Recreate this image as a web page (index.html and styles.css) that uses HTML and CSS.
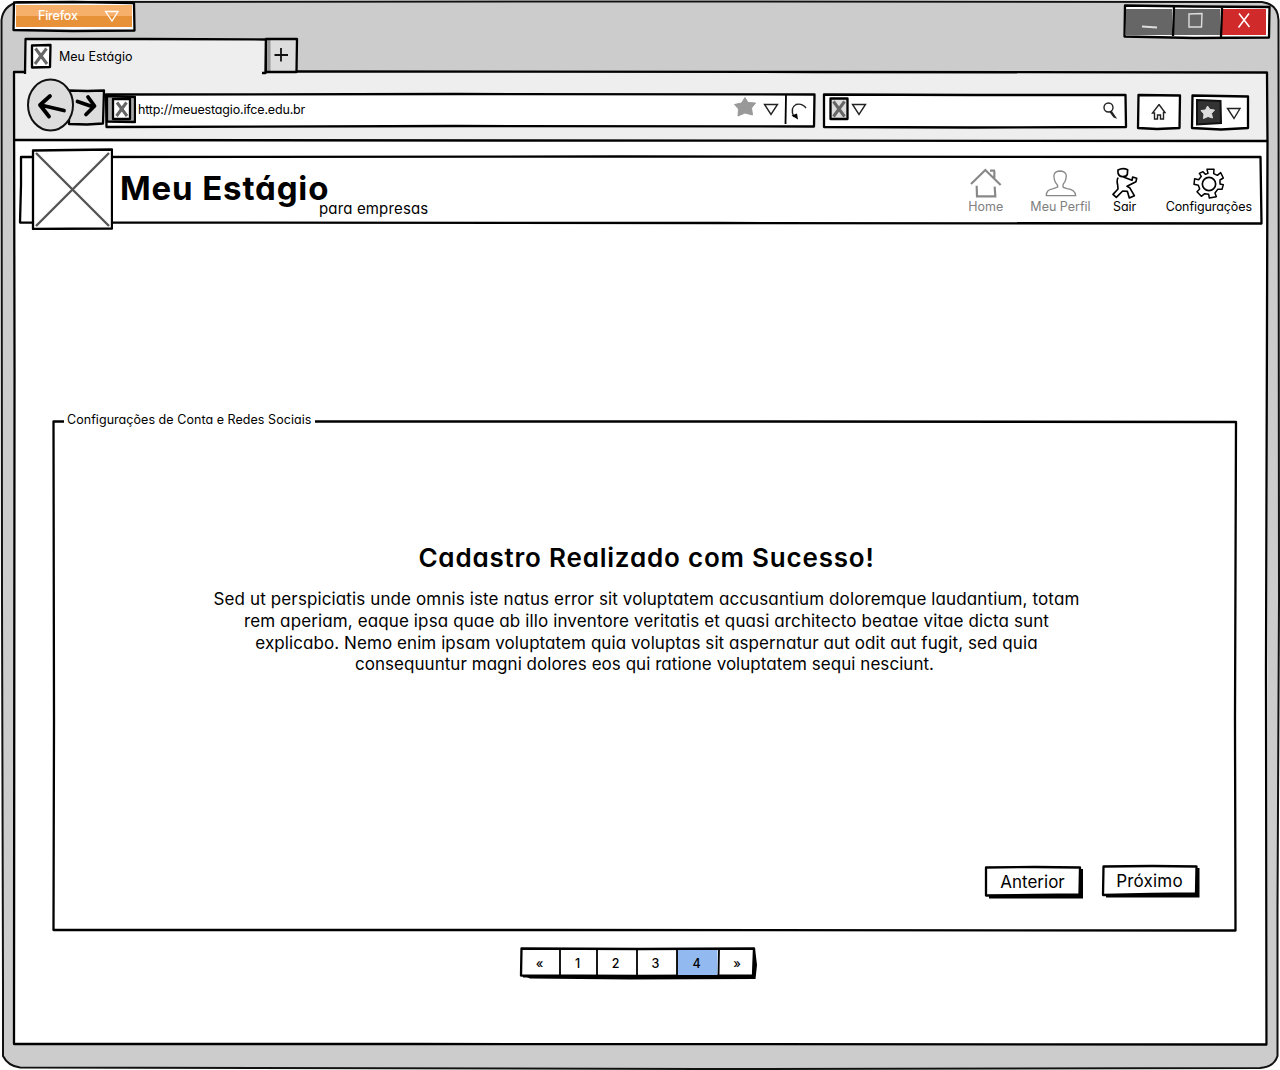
FILE: index.html
```html
<!DOCTYPE html>
<html lang="pt-BR">
<head>
<meta charset="utf-8">
<title>Meu Estágio</title>
<link rel="stylesheet" href="styles.css">
</head>
<body>
<div class="window">
  <svg class="frame"><path class="shell" d="M18 2 L600 1.5 L1262 2 Q1278 4 1278.5 20 L1279 600 L1277.5 910 L1277.5 1056 Q1274 1067 1260 1068 L700 1069 L20 1067.5 Q8 1066 3 1056 L3 985 L2 600 L1.500 20 Q3 6 18 2Z"/></svg>

  <div class="titlebar">
    <div class="menu-button">
      <svg class="frame"><path class="ink fill-white" d="M1 2.500 L60 2 L121 3 L121.500 30.500 L60 31 L0.500 30Z"/></svg>
      <div class="menu-face"><span class="t-firefox">Firefox</span>
        <svg class="tri" width="16" height="12"><path d="M1.500 1.500H14L8 11Z" fill="none" stroke="#fff" stroke-width="1.300"/></svg>
      </div>
    </div>
    <div class="controls">
      <svg class="frame"><path class="ink fill-white" d="M1 1.500 L70 2.500 L145.500 3 L145 33.500 L70 34 L0.500 32.500Z"/></svg>
      <div class="control"><svg width="46" height="26"><path d="M16 17.500L31 18.500" stroke="#ddd" stroke-width="1.800"/></svg></div>
      <div class="control"><svg width="46" height="26"><path d="M15 5L28 4.500L27.500 18H15Z" fill="none" stroke="#ddd" stroke-width="1.400"/></svg></div>
      <div class="control close"><svg width="45" height="26"><path d="M17 4.500L27.500 18M27 4.500L16.500 18.500" stroke="#fff" stroke-width="1.500" fill="none"/></svg></div>
      <svg class="frame"><path class="ink" d="M50 3L49 32M98 4L97 33"/></svg>
    </div>
  </div>

  <div class="tabs">
    <div class="tab">
      <svg class="frame"><path class="ink" d="M1 36L1.500 1L120 1L242 1.500L241.500 35H238"/></svg>
      <svg class="favicon" width="22" height="26"><path class="ink fill-white" d="M2 2.500L20.500 2L20 24L2 24.500Z"/><path class="cross" d="M5.500 5.500L17 21M16.500 5.500L5 21"/></svg>
      <span class="t-tab">Meu Estágio</span>
    </div>
    <div class="tab-new">
      <svg class="frame"><path d="M3 2V34" stroke="#999" stroke-width="3"/><path class="ink" d="M0 1L31 1L30.500 34L0 34Z"/><path class="thin2" d="M8.500 17H22M15 10V23.500"/></svg>
    </div>
  </div>

  <div class="viewport">
    <svg class="frame"><path class="ink" d="M12 1L1 1L1.500 300L1 973L400 973L1253.500 973.500L1253 600L1254.500 72L1254 1.500L800 1L284 0.500"/></svg>
    <div class="toolbar">
      <svg class="frame"><path class="ink" d="M1 69L500 69.500L1254 70"/></svg>
      <div class="history">
        <svg width="80" height="56"><path class="ink btn-fill" d="M42 14.500L60 15L77 14.500L76 47.500L60 48.500L42 48Z"/><path class="bold-line" d="M50.500 25.500L65 30.500M61 21L67.500 30L59 38.500"/><ellipse class="btn-fill" cx="23.500" cy="29" rx="22.500" ry="25.500" stroke="#111" stroke-width="2"/><path class="bold-line" d="M37 34.500L13.500 29M23 20L13 29L22 40.500"/></svg>
      </div>
      <div class="address">
        <svg class="frame"><path class="ink fill-white" d="M1 1.500L350 1L709.500 1.500L709 33.500L350 33L1.500 34Z"/><path class="ink rule" d="M681 2L680.500 31"/></svg>
        <svg class="site" width="31" height="32"><path class="ink fill-mid" d="M2 3L30 4L30 29L2 28.500Z"/><path class="ink fill-white" d="M8 6H25V26H8Z"/><path class="cross" d="M12 9.500L22 23M21.500 9.500L11.500 23"/></svg>
        <span class="t-url">http://meuestagio.ifce.edu.br</span>
        <svg class="star" width="23" height="20"><path d="M11 0.500L14 5.500L21.500 6L17.500 11L18.500 18L11 16L4 19L4.500 12L0.500 7.500L7.500 6Z" fill="#999" stroke="#999" stroke-linejoin="round"/></svg>
        <svg class="drop" width="16" height="13"><path class="thin" d="M1.500 1.500H14.500L8 11.500Z"/></svg>
        <svg class="reload" width="18" height="20"><path class="thin" d="M15 5Q11 0 5 1.500Q-1.500 5 3 14"/><path d="M0.500 12.500L7 16.500L6 10.500Z"/></svg>
      </div>
      <div class="search">
        <svg class="frame"><path class="ink fill-white" d="M1 1.500L150 2L302.500 2L303 34L150 34.500L1 34Z"/></svg>
        <svg class="engine" width="20" height="24"><path class="ink fill-light" d="M1.500 1.500H18.500V22H1.500Z"/><path class="cross" d="M4.500 4.500L15.500 19.500M15.500 4.500L4.500 19.500"/></svg>
        <svg class="drop2" width="16" height="13"><path class="thin" d="M1.500 1.500H14.500L8 11.500Z"/></svg>
        <svg class="lens" width="14" height="17"><circle class="thin" cx="5.500" cy="5.500" r="4.500"/><path class="thin" d="M8 9L12.500 15.500L11 15L7 9.500"/></svg>
      </div>
      <div class="tool home">
        <svg class="frame"><path class="ink fill-white" d="M1.500 2L43 2.500L42.500 35L20 36L1 35Z"/></svg>
        <svg width="16" height="18"><path class="thin" d="M8 0.500L14 8.500H12.500V15H9.500V11H6.500V15H3.500V9H1.500Z"/></svg>
      </div>
      <div class="tool marks">
        <svg class="frame"><path class="ink fill-white" d="M1.500 1.500L57 2.500L57 34L30 35.500L1 34Z"/></svg>
        <svg class="mark-star" width="27" height="28"><path d="M2 2L25.500 3L26 25L2 26.500Z" fill="#333" stroke="#111" stroke-width="2"/><path d="M12.500 8L15 11.500L19.500 12L16.500 15.500L17.500 20L13 18.500L8.500 20.500L9 16L6 12.500L10.500 12Z" fill="#ddd" stroke="#ddd" stroke-linejoin="round"/></svg>
        <svg class="drop3" width="16" height="13"><path class="thin" d="M1.500 1.500H14L8 11.500Z"/></svg>
      </div>
    </div>

    <div class="page">
      <header class="masthead">
        <svg class="frame"><path class="ink" d="M2 2L600 1.500L1241.500 2L1242.500 68.500L700 68L1 67.500L2 30Z"/></svg>
        <svg class="logo" width="82" height="82"><path class="ink fill-white" d="M2 2.500L81 1.500L81 80.500L2 81Z"/><path d="M5 5L78 78M78 5L5 78" stroke="#555" stroke-width="2.400" fill="none"/></svg>
        <h1 class="brand">Meu Estágio</h1>
        <span class="tagline">para empresas</span>
        <nav class="nav">
          <a class="nav-item muted n1"><svg width="34" height="32" viewBox="55 65 102 96"><path d="M61 116L104 74L150 119M118 76L133 76M131 76V102M78 121L79 153H134L132 124" fill="none" stroke="#888" stroke-width="6.500"/></svg><span class="t-home">Home</span></a>
          <a class="nav-item muted n2"><svg width="34" height="32" viewBox="281 65 102 96"><path d="M288 151Q287 133 309 130L322 125Q323 119 315 111Q302 78 329 77Q356 78 344 109Q335 119 339 126L350 130Q374 132 376 151Z" fill="none" stroke="#888" stroke-width="4"/></svg><span class="t-perfil">Meu Perfil</span></a>
          <a class="nav-item n3"><svg width="34" height="32" viewBox="474 65 102 96"><path d="M504 74Q518 66 533 73L532 87Q529 95 516 94Q502 92 504 74ZM505 97Q499 102 503 119L504 131L489 147L499 156L518 137L532 138L538 158L553 151L539 127L531 123L558 109L560 99L548 95L546 105L526 97L519 94" fill="none" stroke="#000" stroke-width="5" stroke-linejoin="round"/></svg><span class="t-sair">Sair</span></a>
          <a class="nav-item n4"><svg width="34" height="32" viewBox="729 65 102 96"><path d="M774 72L795 72L794 85L805 90L815 82L823 98L813 104L813 116L823 118L819 132L806 132L798 143L802 154L781 158L779 147L767 145L757 153L744 139L752 131L748 120L735 117L737 100L749 103L757 93L751 84L762 79L769 87L777 84Z" fill="none" stroke="#000" stroke-width="4.500" stroke-linejoin="round"/><circle cx="780" cy="116" r="20" fill="none" stroke="#000" stroke-width="5"/></svg><span class="t-config">Configurações</span></a>
        </nav>
      </header>

      <section class="panel">
        <svg class="frame"><path class="ink" d="M12 2.500L1.500 2.500L2 300L1.500 511L500 511L1183.500 511.500L1183 300L1184 3L700 2.500L263 2.500"/></svg>
        <div class="legend"><span class="t-legend">Configurações de Conta e Redes Sociais</span></div>
        <h2 class="headline"><span class="t-head">Cadastro Realizado com Sucesso!</span></h2>
        <p class="copy">
          <span class="line l1">Sed ut perspiciatis unde omnis iste natus error sit voluptatem accusantium doloremque laudantium, totam</span>
          <span class="line l2">rem aperiam, eaque ipsa quae ab illo inventore veritatis et quasi architecto beatae vitae dicta sunt</span>
          <span class="line l3">explicabo. Nemo enim ipsam voluptatem quia voluptas sit aspernatur aut odit aut fugit, sed quia</span>
          <span class="line l4">consequuntur magni dolores eos qui ratione voluptatem sequi nesciunt.</span>
        </p>
        <div class="actions">
          <button class="btn prev"><svg class="frame"><path d="M4 29H94V3H98V32.500H4Z"/><path class="ink fill-white" d="M1 1.500L50 1L95 1.500L94.500 28.500L50 29L1 29.500Z"/></svg><span class="t-prev">Anterior</span></button>
          <button class="btn next"><svg class="frame"><path d="M4 29H94V3H97.500V32.500H4Z"/><path class="ink fill-white" d="M1.500 1.500L50 1L94.500 1.500L94 28.500L50 29L1 30Z"/></svg><span class="t-next">Próximo</span></button>
        </div>
      </section>

      <div class="pager">
        <svg class="frame"><path d="M0 27L10 31.500L110 32.500L235.500 32L237 18L235 1L230 1V28Z"/><path class="ink fill-white" d="M1.500 1.500L120 2L234 1.500L233 28.500L120 29L1 28.500Z"/><path class="current" d="M157 3H197.500V28H157Z"/><path class="ink rule" d="M40 2V29M77 2V29M117 2V29M157 2V29M199 2L198.500 31M3 29.500H234"/></svg>
        <span class="cell">«</span><span class="cell">1</span><span class="cell">2</span><span class="cell">3</span><span class="cell">4</span><span class="cell">»</span>
      </div>
    </div>
  </div>
</div>
</body>
</html>
```
FILE: styles.css
```css
* { box-sizing: border-box; }
body { margin: 0; background: #fff; color: #000; font-family: Inter, "Noto Sans", sans-serif; font-feature-settings: "cv11"; font-size: 12.5px; }
svg { display: block; flex: none; fill: #000; }
.frame { position: absolute; inset: 0; width: 100%; height: 100%; overflow: visible; pointer-events: none; }
.ink { stroke: #000; stroke-width: 2.3; fill: none; stroke-linejoin: round; }
.rule { stroke-width: 1.8; }
.fill-white { fill: #fff; }
.fill-mid { fill: #aaa; }
.fill-light { fill: #ddd; }
.btn-fill { fill: #ddd; }
.current { fill: #92b9f0; }
.shell { fill: #ccc; stroke: #111; stroke-width: 2; }
.thin { fill: none; stroke: #222; stroke-width: 1.4; }
.thin2 { fill: none; stroke: #111; stroke-width: 1.8; }
.cross { fill: none; stroke: #666; stroke-width: 3; }
.bold-line { fill: none; stroke: #000; stroke-width: 3.8; stroke-linecap: round; stroke-linejoin: round; }
span, h1, h2 { white-space: nowrap; }

.window { position: relative; width: 1280px; height: 1070px; padding: 0 12px 0 13px; overflow: hidden; }
.titlebar { position: relative; display: flex; justify-content: space-between; height: 38px; }
.menu-button { position: relative; width: 122px; height: 31px; padding: 5px 0 0 3px; }
.menu-face { position: relative; display: flex; justify-content: space-between; align-items: center; width: 116px; height: 22px; padding: 0 12px 0 22px; background: linear-gradient(#f6b06b 50%, #e79139 50%); color: #fff; }
.t-firefox { font-weight: 500; letter-spacing: -0.2px; }
.menu-face span { line-height: 22px; }
.controls { position: relative; display: flex; gap: 2px; width: 147px; height: 36px; margin: 4px -3px 0 0; padding: 5px 0 0 2px; }
.control { position: relative; width: 46px; height: 26px; background: #666; }
.close { width: 44px; background: #d02a2a; }

.tabs { position: relative; z-index: 3; display: flex; height: 33px; padding-left: 11px; }
.tab { position: relative; display: flex; align-items: center; gap: 7px; width: 242px; height: 36px; padding: 0 0 0 6px; background: #eee; }
.favicon { position: relative; }
.tab-new { position: relative; width: 31px; height: 35px; background: #ddd; }

.viewport { position: relative; width: 1255px; height: 974px; background: #fff; }
.viewport > .frame { z-index: 2; }
.toolbar { position: relative; display: flex; height: 69px; padding-left: 14px; background: #eee; }
.history { position: relative; margin-top: 5px; width: 78px; }
.address { position: relative; display: flex; width: 710px; height: 34px; margin-top: 22px; }
.site { position: relative; }
.t-url { position: relative; width: 168px; margin-left: 2px; line-height: 33px; letter-spacing: -0.17px; }
.star { position: relative; margin: 4px 0 0 428px; }
.drop { position: relative; margin: 10px 0 0 6px; }
.reload { position: relative; margin: 10px 0 0 12px; overflow: visible; }
.search { position: relative; display: flex; width: 304px; height: 36px; margin: 22px 0 0 8px; }
.engine { position: relative; margin: 4px 0 0 6px; }
.drop2 { position: relative; margin: 10px 0 0 2px; }
.lens { position: relative; margin: 9px 0 0 236px; }
.tool { position: relative; display: flex; height: 37px; margin: 22px 0 0 10px; }
.home { width: 44px; padding: 11px 0 0 14px; }
.home svg:last-child, .mark-star, .drop3 { position: relative; }
.marks { width: 58px; margin: 23px 0 0 10px; padding: 5px 0 0 4px; gap: 4px; }
.mark-star { margin-top: -1px; }
.drop3 { margin-top: 8px; }

.page { position: relative; padding: 15px 6px 0; }
.masthead { position: relative; display: flex; height: 68px; width: 1243px; padding-left: 12px; }
.logo { position: relative; margin: -7px 7px 0 0; }
.brand { position: relative; width: 199px; margin: 0; font-size: 33px; line-height: 67px; font-weight: 700; letter-spacing: 0.85px; }
.tagline { position: relative; margin-top: 44px; font-size: 15px; line-height: 20px; letter-spacing: 0.15px; }
.nav { position: relative; display: flex; margin-left: auto; padding: 12px 10px 0 0; gap: 22px; }
.nav-item { display: flex; flex-direction: column; align-items: center; }
.nav-item span { line-height: 15px; }
.muted { color: #808080; }
.n2 { margin-left: 5px; }
.n3 { margin-left: -5px; }
.n4 { margin-left: 2px; }
.n4 span { letter-spacing: -0.08px; }

.panel { position: relative; display: flex; flex-direction: column; width: 1185px; height: 513px; margin: 196px 0 0 33px; padding-left: 4px; }
.legend { position: relative; align-self: flex-start; margin: -8px 0 0 8px; padding: 0 3px; line-height: 17px; letter-spacing: 0.05px; }
.headline { position: relative; margin: 114px 0 0; text-align: center; font-size: 26px; line-height: 31px; font-weight: 600; letter-spacing: 0.8px; }
.copy { margin: 16px 0 0; font-size: 17px; line-height: 21.8px; text-align: center; }
.line { display: block; width: fit-content; margin: 0 auto; }
.l1, .l2 { letter-spacing: 0.12px; }
.l3 { letter-spacing: 0.08px; }
.l4 { letter-spacing: 0.04px; padding-right: 4px; }
.actions { display: flex; gap: 18px; margin: 189px 36px 0 auto; }
.btn { position: relative; width: 99px; height: 34px; padding: 0 4px 2px 0; border: 0; background: none; font: inherit; font-size: 17px; color: #000; }
.btn span { position: relative; }
.prev { margin-top: 1px; }
.t-next { letter-spacing: 0.2px; }

.pager { position: relative; display: grid; grid-template-columns: 39px 37px 39px 41px 41px 40px; width: 236px; height: 33px; margin: 15px 0 0 501px; font-weight: 500; }
.cell { position: relative; text-align: center; line-height: 33px; }
```
